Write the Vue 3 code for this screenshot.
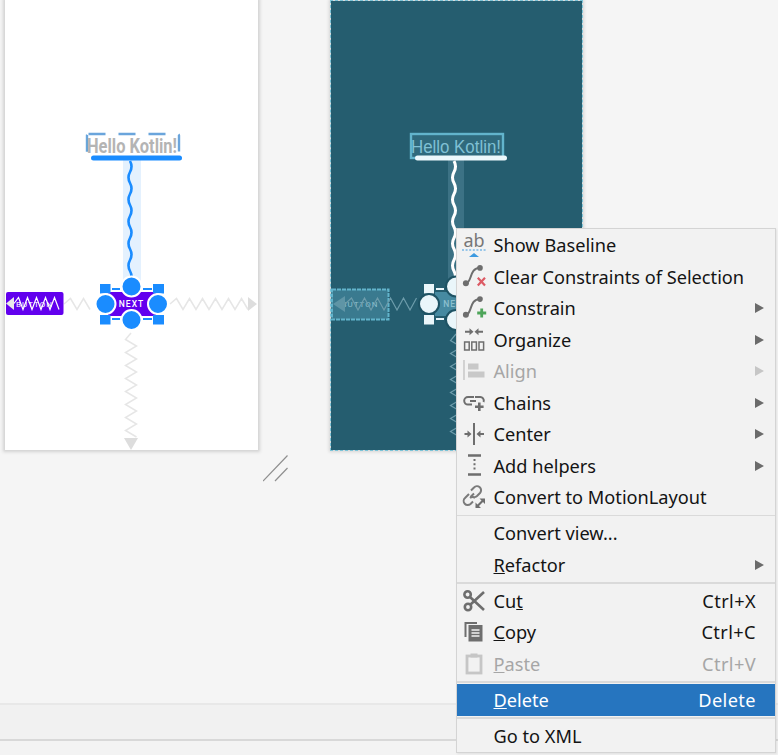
<script setup>
function zigH(x1, x2, y, step = 6.5, amp = 5.5) {
  let d = `M${x1} ${y}`, up = true
  for (let x = x1 + step; x <= x2; x += step) {
    d += ` L${x} ${up ? y - amp : y + amp}`
    up = !up
  }
  return d
}
function zigV(y1, y2, x, step = 6.5, amp = 5.5) {
  let d = `M${x} ${y1}`, left = true
  for (let y = y1 + step; y <= y2; y += step) {
    d += ` L${left ? x - amp : x + amp} ${y}`
    left = !left
  }
  return d
}
function wave(x, y1, y2) {
  let d = `M${x} ${y1}`, s = 1
  for (let y = y1; y < y2; y += 11) {
    d += ` Q${x + s * 3} ${y + 5.5} ${x} ${y + 11}`
    s = -s
  }
  return d
}
const sections = [
  [
    { icon: 'baseline', label: 'Show Baseline' },
    { icon: 'clear', label: 'Clear Constraints of Selection' },
    { icon: 'constrain', label: 'Constrain', sub: true },
    { icon: 'organize', label: 'Organize', sub: true },
    { icon: 'align', label: 'Align', sub: true, off: true },
    { icon: 'chains', label: 'Chains', sub: true },
    { icon: 'center', label: 'Center', sub: true },
    { icon: 'helpers', label: 'Add helpers', sub: true },
    { icon: 'motion', label: 'Convert to MotionLayout' }
  ],
  [
    { label: 'Convert view...' },
    { pre: 'R', label: 'efactor', sub: true }
  ],
  [
    { icon: 'cut', label: 'Cu', post: 't', key: 'Ctrl+X' },
    { icon: 'copy', pre: 'C', label: 'opy', key: 'Ctrl+C' },
    { icon: 'paste', pre: 'P', label: 'aste', key: 'Ctrl+V', off: true }
  ],
  [{ pre: 'D', label: 'elete', key: 'Delete', active: true }],
  [{ label: 'Go to XML' }]
]
const hZigLeft = zigH(64, 95, 304)
const hZigRight = zigH(170, 248, 304)
const vZig = zigV(333, 438, 131)
const btnZig = zigH(14, 63, 303.5, 4.5, 6)
const rightBtnZig = zigH(345, 418, 304, 6.5, 6)
const rightV = zigV(334, 439, 456)
const waveLeft = wave(130, 161, 276)
const waveRight = wave(454, 161, 276)
</script>

<template>
  <div class="page">
    <div class="canvas">
      <div class="phone phone-light">
        <svg class="art" width="253" height="450" viewBox="5 0 253 450">
          <rect x="123" y="160" width="18" height="122" fill="#e4f1fe" />
          <rect x="87" y="134" width="92" height="24" rx="1.5" fill="none" stroke="#6aa5dc" stroke-width="2.4" stroke-dasharray="17 13" />
          <text class="hello-bold" x="87" y="153" textLength="90" lengthAdjust="spacingAndGlyphs">Hello Kotlin!</text>
          <rect x="91" y="155.5" width="91" height="5" rx="2.5" fill="#1a8cff" />
          <path :d="waveLeft" fill="none" stroke="#1a8cff" stroke-width="2.6" />
          <path :d="hZigLeft" fill="none" stroke="#e6e6e6" stroke-width="1.5" />
          <path :d="hZigRight" fill="none" stroke="#e6e6e6" stroke-width="1.5" />
          <path d="M248 297 L257 304 L248 311Z" fill="#dddddd" />
          <path :d="vZig" fill="none" stroke="#e6e6e6" stroke-width="1.5" />
          <path d="M124 438 L131 450 L138 438Z" fill="#dddddd" />
          <rect x="6" y="292" width="57.5" height="23" rx="2" fill="#6200ee" />
          <text class="btn-label" x="34.5" y="307" text-anchor="middle" fill="#ffffff">BUTTON</text>
          <path :d="btnZig" fill="none" stroke="#ffffff" stroke-width="1.2" />
          <path d="M14 297 L6 303.5 L14 310Z" fill="#e8e8e8" />
          <rect x="108" y="292" width="48" height="24" fill="#6200ee" />
          <text class="next-label" x="131.5" y="307" text-anchor="middle" fill="#ffffff">NEXT</text>
          <g fill="#1a8cff">
            <rect x="100" y="284" width="10.5" height="9.5" />
            <rect x="153" y="284" width="11" height="9.5" />
            <rect x="100" y="315" width="10.5" height="9.5" />
            <rect x="153" y="315" width="11" height="9.5" />
            <rect x="112" y="288" width="8" height="2" />
            <rect x="143" y="288" width="9" height="2" />
            <rect x="112" y="318" width="8" height="2" />
            <rect x="143" y="318" width="9" height="2" />
          </g>
          <g fill="#1a8cff" stroke="#ffffff" stroke-width="2">
            <circle cx="131.5" cy="286.5" r="10" />
            <circle cx="105.5" cy="304" r="10" />
            <circle cx="158" cy="304" r="10" />
            <circle cx="131.5" cy="320" r="10" />
          </g>
        </svg>
      </div>

      <div class="phone phone-dark">
        <svg class="art" width="251" height="449" viewBox="331 1 251 449">
          <rect x="448" y="160" width="16" height="122" fill="#3c7285" />
          <rect x="411" y="134" width="92" height="24" fill="#2f6a7d" stroke="#62b4cc" stroke-width="2.4" />
          <text class="hello-reg" x="411" y="152.5" textLength="90" lengthAdjust="spacingAndGlyphs">Hello Kotlin!</text>
          <rect x="415" y="155.5" width="92" height="5" rx="2.5" fill="#ecf8fc" />
          <path :d="waveRight" fill="none" stroke="#ffffff" stroke-width="3" />
          <rect x="332" y="289.5" width="56.5" height="30" fill="#3a7a8f" stroke="#62b4cc" stroke-width="2" stroke-dasharray="4 1" />
          <text class="btn-label" x="360" y="307" text-anchor="middle" fill="#8cc0cf">BUTTON</text>
          <path :d="rightBtnZig" fill="none" stroke="#6d9cab" stroke-width="1.2" />
          <path d="M345 296 L333 304 L345 312Z" fill="#5f95a6" />
          <path :d="rightV" fill="none" stroke="#6d9cab" stroke-width="1.2" />
          <path d="M435 292 L475 292 L475 316 L435 316Z" fill="#468aa1" />
          <text class="next-label" x="456" y="307" text-anchor="middle" fill="#8cc0cf">NEXT</text>
          <g fill="#eaf6fa">
            <rect x="424" y="284" width="10" height="9.5" />
            <rect x="424" y="315" width="10" height="9.5" />
            <rect x="436" y="288" width="8" height="2" />
            <rect x="436" y="318" width="8" height="2" />
          </g>
          <g fill="#eaf6fa" stroke="#1e5364" stroke-width="2">
            <circle cx="456" cy="286.5" r="10" />
            <circle cx="429" cy="304" r="10" />
            <circle cx="456" cy="320" r="10" />
          </g>
        </svg>
      </div>

      <svg class="break-mark" width="30" height="30" viewBox="0 0 30 30">
        <path d="M0 26 L24.5 0.5 M12 26 L24.5 13" stroke="#8f8f8f" stroke-width="1.2" fill="none" />
      </svg>
    </div>
    <div class="strip"></div>
    <div class="foot"></div>

    <div class="menu">
      <template v-for="(group, g) in sections" :key="g">
        <div v-if="g > 0" class="sep"></div>
        <div
          v-for="item in group"
          :key="item.label"
          class="row"
          :class="{ off: item.off, active: item.active }"
        >
          <svg class="ico" width="24" height="24" viewBox="0 0 24 24">
            <template v-if="item.icon === 'baseline'">
              <text class="ab" x="12" y="14" text-anchor="middle">ab</text>
              <path d="M0 17H24" stroke="#3d9ae0" stroke-width="1" stroke-dasharray="2 1.6" />
              <path d="M7 24 L12 20 L17 24Z" fill="#3d9ae0" />
            </template>
            <template v-else-if="item.icon === 'clear'">
              <path d="M4 18.3 C10 18 7 3 18 2.7" fill="none" stroke="#6e6e6e" stroke-width="2" />
              <circle cx="3.9" cy="18.3" r="3" fill="#6e6e6e" />
              <circle cx="18" cy="2.9" r="2.8" fill="#6e6e6e" />
              <path d="M15.8 12.8 L23 20.5 M23 12.8 L15.8 20.5" stroke="#dc5a64" stroke-width="2.2" />
            </template>
            <template v-else-if="item.icon === 'constrain'">
              <path d="M4 18.8 C10 18.5 7 3 18 3" fill="none" stroke="#6e6e6e" stroke-width="2" />
              <circle cx="3.9" cy="18.8" r="3" fill="#6e6e6e" />
              <circle cx="18" cy="3.1" r="2.8" fill="#6e6e6e" />
              <path d="M19.7 12.5 V21.5 M15.2 17 H24.2" stroke="#4ea55a" stroke-width="2.8" />
            </template>
            <template v-else-if="item.icon === 'organize'">
              <path d="M3 3.7 H8.5 M15 3.7 H21" stroke="#6e6e6e" stroke-width="2" />
              <path d="M7.5 0.2 L11.5 3.7 L7.5 7.2Z M16.5 0.2 L12.5 3.7 L16.5 7.2Z" fill="#6e6e6e" />
              <g fill="none" stroke="#6e6e6e" stroke-width="1.5">
                <rect x="2.6" y="14" width="4.6" height="8" />
                <rect x="9.8" y="14" width="4.6" height="8" />
                <rect x="17" y="14" width="4.6" height="8" />
              </g>
            </template>
            <template v-else-if="item.icon === 'align'">
              <path d="M2 1 V21" stroke="#c4c4c4" stroke-width="1.4" />
              <rect x="6" y="4.5" width="10.5" height="6" fill="#c8c8c8" />
              <rect x="6" y="12.5" width="16.5" height="6" fill="#c8c8c8" />
            </template>
            <template v-else-if="item.icon === 'chains'">
              <path d="M12 6 H6 A3.8 3.8 0 0 0 6 13.6 H10" fill="none" stroke="#6e6e6e" stroke-width="2" />
              <path d="M8 10 H14 M13 6 H17.5 A3.6 3.6 0 0 1 21.5 11" fill="none" stroke="#6e6e6e" stroke-width="2" />
              <path d="M17.3 11.5 V20 M13 15.7 H21.6" stroke="#6e6e6e" stroke-width="2.6" />
            </template>
            <template v-else-if="item.icon === 'center'">
              <path d="M12 1 V23" stroke="#6e6e6e" stroke-width="2" />
              <path d="M2.5 12 H6 M18 12 H22" stroke="#6e6e6e" stroke-width="2" />
              <path d="M5.5 8.5 L9.5 12 L5.5 15.5Z M18.5 8.5 L14.5 12 L18.5 15.5Z" fill="#6e6e6e" />
            </template>
            <template v-else-if="item.icon === 'helpers'">
              <path d="M6 1.5 H19 M6 20.5 H19" stroke="#6e6e6e" stroke-width="2.4" />
              <path d="M12.5 5 V17" stroke="#6e6e6e" stroke-width="2" stroke-dasharray="2 2.2" />
            </template>
            <template v-else-if="item.icon === 'motion'">
              <path d="M9 5.5 L12 2.5 A4 4 0 0 1 18 8 L15 11 A4 4 0 0 1 9.5 11 M12 8.5 L8.5 12 M7 9 L3 13 A4 4 0 0 0 8.5 19 L11 16.5 M8 13 A4 4 0 0 1 13 13" fill="none" stroke="#7a7a7a" stroke-width="2" />
              <path d="M14.5 22 L22 14.5" stroke="#6e6e6e" stroke-width="2.2" />
              <path d="M17.5 13.5 H23 V19Z M13.5 17.5 V23 H19Z" fill="#6e6e6e" />
            </template>
            <template v-else-if="item.icon === 'cut'">
              <g fill="none" stroke="#6e6e6e" stroke-width="2.6">
                <circle cx="5.6" cy="5.5" r="3.2" />
                <circle cx="6" cy="18" r="3.2" />
                <path d="M8 8 L22 21 M8.5 15.5 L22 3" />
              </g>
            </template>
            <template v-else-if="item.icon === 'copy'">
              <path d="M3.5 17 V3 H15" fill="none" stroke="#6e6e6e" stroke-width="2" />
              <rect x="6.5" y="5" width="14" height="16.5" fill="#6e6e6e" />
              <path d="M9.5 10 H17.5 M9.5 13 H17.5 M9.5 16 H17.5" stroke="#f1f1f1" stroke-width="1.3" />
            </template>
            <template v-else-if="item.icon === 'paste'">
              <rect x="5" y="4" width="14" height="17" fill="none" stroke="#c6c6c6" stroke-width="2.8" />
              <rect x="8.5" y="1.5" width="7" height="4" fill="#c6c6c6" />
            </template>
          </svg>
          <span class="label"><u v-if="item.pre">{{ item.pre }}</u>{{ item.label }}<u v-if="item.post">{{ item.post }}</u></span>
          <span v-if="item.key" class="key">{{ item.key }}</span>
          <span v-if="item.sub" class="caret"></span>
        </div>
      </template>
    </div>
  </div>
</template>

<style scoped>
.page {
  position: relative;
  width: 778px;
  height: 755px;
  overflow: hidden;
  background: #f5f5f5;
  display: flex;
  flex-direction: column;
  font-family: "Noto Sans", "Noto Sans CJK SC", sans-serif;
}
.canvas {
  position: relative;
  flex: 0 0 703px;
}
.strip {
  flex: 0 0 38px;
  box-sizing: border-box;
  background: #f1f1f1;
  border-top: 2px solid #e8e8e8;
  border-bottom: 2px solid #d8d8d8;
}
.foot {
  flex: 1;
  background: #f3f3f3;
}
.phone {
  position: absolute;
}
.phone-light {
  left: 5px;
  top: 0;
  width: 253px;
  height: 450px;
  background: #ffffff;
  box-shadow: 0 0 3px 2px #d2d2d2;
}
.phone-dark {
  left: 331px;
  top: 1px;
  width: 251px;
  height: 449px;
  background: #255d6f;
  outline: 1.5px dashed #7cc4d8;
  box-shadow: 0 0 3px 2px #d6d6d6;
}
.art {
  display: block;
}
.break-mark {
  position: absolute;
  left: 263px;
  top: 455px;
}
.hello-bold {
  font-family: Roboto, sans-serif;
  font-weight: 700;
  font-size: 20px;
  fill: #b4b4b4;
}
.hello-reg {
  font-family: "Liberation Sans", sans-serif;
  font-size: 18px;
  fill: #7fc0d4;
}
.btn-label {
  font-family: Roboto, sans-serif;
  font-size: 8px;
  letter-spacing: 1px;
}
.next-label {
  font-family: Roboto, sans-serif;
  font-size: 8.5px;
  font-weight: 500;
  letter-spacing: 1px;
}
.menu {
  position: absolute;
  left: 456px;
  top: 228px;
  width: 317.5px;
  padding: 0.5px 0;
  background: #f2f2f2;
  border: 1px solid #d4d4d4;
  box-shadow: 1px 1px 2px rgba(0, 0, 0, 0.08);
}
.sep {
  height: 4.5px;
  display: flex;
  align-items: center;
}
.sep::before {
  content: "";
  flex: 1;
  height: 1.5px;
  background: #dadada;
}
.row {
  display: flex;
  align-items: center;
  height: 31.5px;
  padding: 0 10.5px 0 5px;
  font-size: 18.2px;
  color: #141414;
  white-space: nowrap;
}
.ico {
  flex: 0 0 24px;
  margin-right: 7.5px;
  overflow: visible;
}
.ab {
  font-family: "Noto Sans", sans-serif;
  font-size: 18px;
  fill: #777777;
}
.label {
  flex: 1;
}
.key {
  flex: none;
  margin-right: 8px;
  letter-spacing: 0.4px;
}
.caret {
  flex: none;
  width: 0;
  height: 0;
  border-left: 9px solid #6b6b6b;
  border-top: 5.5px solid transparent;
  border-bottom: 5.5px solid transparent;
}
.off {
  color: #a6a6a6;
}
.off .caret {
  border-left-color: #c6c6c6;
}
.active {
  background: #2675bf;
  color: #ffffff;
}
</style>
